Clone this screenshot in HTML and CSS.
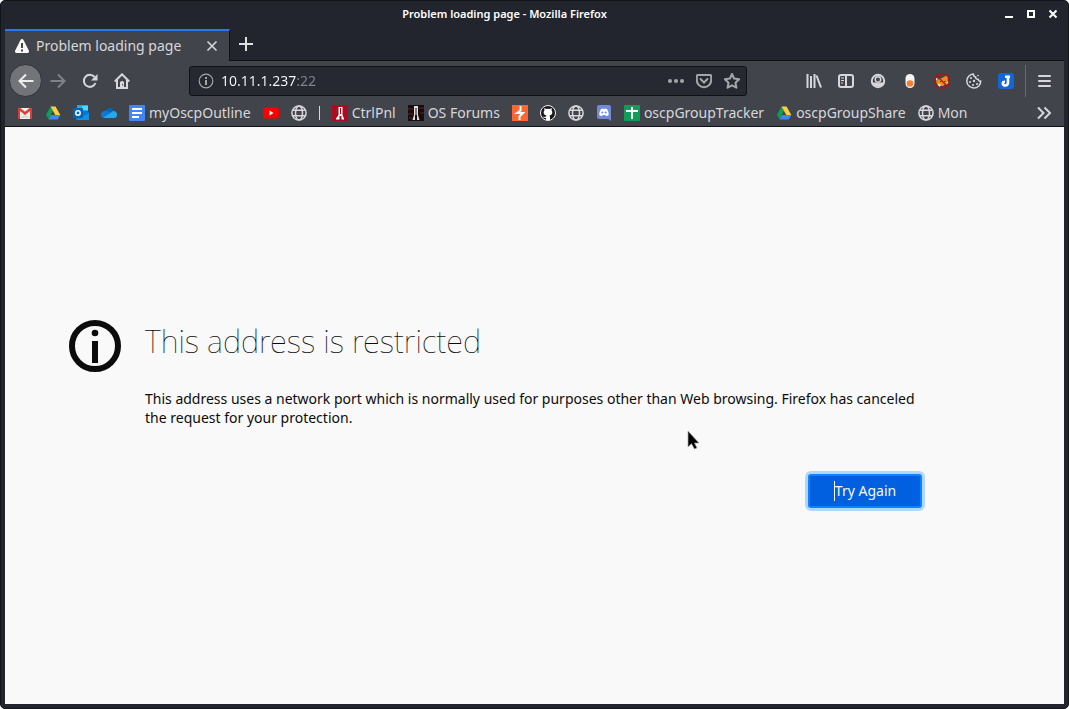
FILE: index.html
```html
<!DOCTYPE html>
<html lang="en">
<head>
<meta charset="utf-8">
<title>Problem loading page - Mozilla Firefox</title>
<link rel="stylesheet" href="styles.css">
</head>
<body>
<svg class="defs" aria-hidden="true">
  <symbol id="globe" viewBox="0 0 16 16"><g fill="none" stroke="currentColor" stroke-width="1.5"><circle cx="8" cy="8" r="7.1"/><ellipse cx="8" cy="8" rx="3.5" ry="7.1"/><path d="M2 5.3h12M2 10.7h12"/></g></symbol>
  <symbol id="drive" viewBox="0 0 16 16"><path fill="#0f9d58" d="M5.5 1.5 8 6 3.6 14.300 1 10z"/><path fill="#ffcd40" d="M5.500 1.500h5L15.300 10h-5z"/><path fill="#4285f4" d="M6 10h9.300l-2.500 4.500H3.500z"/></symbol>
</svg>
<div class="window">
  <header class="titlebar">
    <span class="title">Problem loading page - Mozilla Firefox</span>
    <div class="window-controls">
      <button aria-label="Minimize"><svg viewBox="0 0 10 10"><path fill="#fff" d="M1 7h8v2H1z"/></svg></button>
      <button aria-label="Maximize"><svg viewBox="0 0 10 10"><path fill="none" stroke="#fff" stroke-width="2" d="M2 2h6v6H2z"/></svg></button>
      <button aria-label="Close"><svg viewBox="0 0 10 10"><path stroke="#fff" stroke-width="2" d="m1.500 1.500 7 7m0-7-7 7"/></svg></button>
    </div>
  </header>

  <nav class="tabs" aria-label="Tabs">
    <div class="tab">
      <svg class="icon" viewBox="0 0 16 16"><path fill="#f9f9fa" fill-rule="evenodd" d="M8 1c.7 0 1.200.400 1.500 1l5.300 10.500c.600 1.300 0 2.500-1.300 2.500h-11c-1.300 0-1.900-1.200-1.300-2.500L6.500 2c.3-.6.8-1 1.500-1zM7 5v5h2V5zm0 6.500v2h2v-2z"/></svg>
      <span class="tab-label">Problem loading page</span>
      <button aria-label="Close tab"><svg class="icon" viewBox="0 0 16 16"><path stroke="#d7d7db" stroke-width="1.600" d="m3.500 3.500 9 9m0-9-9 9"/></svg></button>
    </div>
    <button class="new-tab" aria-label="New tab"><svg class="icon" viewBox="0 0 16 16"><path stroke="#e0e0e2" stroke-width="2" d="M8 1v14M1 8h14"/></svg></button>
  </nav>

  <div class="toolbar">
    <button class="back" aria-label="Back"><svg class="icon" viewBox="0 0 16 16"><path class="line" d="M15.500 8H1.500M8 1.500 1.500 8 8 14.500"/></svg></button>
    <button class="dim" aria-label="Forward"><svg class="icon" viewBox="0 0 16 16"><path class="line" d="M.5 8h14M8 1.500 14.500 8 8 14.500"/></svg></button>
    <button aria-label="Reload"><svg class="icon" viewBox="0 0 16 16"><path class="line" d="M13.500 10A6 6 0 1 1 12.500 4"/><path fill="currentColor" d="M15.500 1v6.500H9z"/></svg></button>
    <button aria-label="Home"><svg class="icon" viewBox="0 0 16 16"><path class="line" d="M.8 8.500 8 1.300l7.200 7.200M3 7v7.900h10V7"/><path fill="currentColor" fill-rule="evenodd" d="M6 15V9.500Q6 8 8 8t2 1.500V15zM8.200 11v1.500h1V11z"/></svg></button>
    <div class="urlbar">
      <svg class="icon info" viewBox="0 0 16 16"><circle cx="8" cy="8" r="6.800" fill="none" stroke="currentColor" stroke-width="1.200"/><path fill="currentColor" d="M7 7h2v5H7zM7 4h2v2H7z"/></svg>
      <input type="text" value="10.11.1.237:22" aria-label="Address">
      <button aria-label="Page actions"><svg class="icon" viewBox="0 0 16 16"><g fill="currentColor"><circle cx="2" cy="8" r="2"/><circle cx="8" cy="8" r="2"/><circle cx="14" cy="8" r="2"/></g></svg></button>
      <button aria-label="Save to Pocket"><svg class="icon" viewBox="0 0 16 16"><path class="line" d="M2 2h12q1.200 0 1.200 1.200V7a7.200 7.200 0 0 1-14.400 0V3.200Q.8 2 2 2z"/><path class="line" stroke-linecap="round" d="M4.500 6 8 9.500 11.500 6"/></svg></button>
      <button aria-label="Bookmark this page"><svg class="icon" viewBox="0 0 16 16"><path class="line" stroke-linejoin="round" d="m8 1 2.100 4.500 5 .7-3.600 3.500.9 5L8 12.300l-4.400 2.400.9-5L.9 6.200l5-.7z"/></svg></button>
    </div>
    <div class="tools">
      <button aria-label="Library"><svg class="icon" viewBox="0 0 16 16"><path class="line" d="M1.500 1v14M5 3v12M8.500 1v14M10.500 2.500l4.500 12"/></svg></button>
      <button aria-label="Sidebars"><svg class="icon" viewBox="0 0 16 16"><rect class="line" x="1" y="2" width="14" height="12" rx="2"/><path class="line" d="M8 2v12"/><path stroke="currentColor" d="M3 5h3M3 7.500h3M3 10h2"/></svg></button>
      <button aria-label="Account"><svg class="icon" viewBox="0 0 16 16"><circle class="line" cx="8" cy="8" r="6.200"/><circle class="line thin" cx="8" cy="6.500" r="2.700"/><path fill="currentColor" d="M2.500 9.500h3.300q2.200 1.600 4.400 0h3.300c-1 5.500-10 5.500-11 0z"/></svg></button>
      <button aria-label="Proxy switch"><svg class="icon" viewBox="0 0 16 16"><rect x="3.500" y="1" width="9" height="14" rx="4.500" fill="#f4f4f4"/><circle cx="8" cy="10.500" r="3.300" fill="#f58033"/></svg></button>
      <button aria-label="Fox extension"><svg class="icon" viewBox="0 0 16 16"><path fill="#e8901c" d="m8 5 4.500-2.500L14 4l-.5 5.500L9 13l-4.500-.5L2 9l2-2.500z"/><path fill="#f6e6c8" d="m1.500 5 2.500.5L2.500 8zM3 10.500l4 1L5.500 14zM13.500 8l1 1.500-3 3z"/><path fill="#5a3b20" d="M6 8h1v1H6zM10 8h1.500v1H10z"/><circle cx="8" cy="8" r="7.300" fill="none" stroke="#c4090c" stroke-width="1.200"/><path stroke="#c4090c" stroke-width="1.200" d="m3 3 10 10"/></svg></button>
      <button aria-label="Cookies"><svg class="icon" viewBox="0 0 16 16"><path class="line round thin" d="M7.500 1a7 7 0 1 0 7.300 7c-1.400.500-2.500-.3-2.400-1.800-2 .3-3.100-.7-2.600-2.200C8 3.800 7.300 2.800 7.500 1z"/><g fill="currentColor"><circle cx="5" cy="5" r="1"/><circle cx="4" cy="9" r="1"/><circle cx="8" cy="8" r="1.200"/><circle cx="7" cy="12" r="1"/><circle cx="11" cy="11" r="1"/><circle cx="12" cy="2.500" r=".8"/></g></svg></button>
      <button aria-label="Joplin"><svg class="icon" viewBox="0 0 16 16"><rect width="16" height="16" rx="3" fill="#1267d8"/><path fill="none" stroke="#fff" stroke-width="2.600" d="M7 3.800h5M10 3.800v5.700q0 3-2.600 3T4.800 10.300q0-1.600 2.200-1.500"/></svg></button>
    </div>
    <button class="menu" aria-label="Open menu"><svg class="icon" viewBox="0 0 16 16"><path class="line" stroke-linecap="round" d="M3 3h11M3 8h11M3 13h11"/></svg></button>
  </div>

  <nav class="bookmarks" aria-label="Bookmarks">
    <a href="#" aria-label="Gmail"><svg class="icon" viewBox="0 0 16 16"><path fill="#f1f1f1" d="M2 3h12v11H2z"/><path fill="#ddd" d="m3 13 5-5 5 5z"/><path fill="#d93f32" d="M1 14V3.500Q1.500 2 3 2.700l5 4 5-4q1.500-.7 2 .8V14h-2V6l-5 4-5-4v8z"/></svg></a>
    <a href="#" aria-label="Google Drive"><svg class="icon"><use href="#drive"/></svg></a>
    <a href="#" aria-label="Outlook"><svg class="icon" viewBox="0 0 16 16"><path fill="#28a8ea" d="M4 0h11v8H4z"/><path fill="#50d9ff" d="M9 1h6v4H9z"/><path fill="#0078d4" d="M3 6h12l1 2v7H3z"/><path fill="#1490df" d="m3 15 13-7v7z"/><rect y="3" width="10" height="10" rx="1" fill="#0364b8"/><circle cx="5" cy="8" r="2.200" fill="none" stroke="#fff" stroke-width="1.500"/></svg></a>
    <a href="#" aria-label="OneDrive"><svg class="icon" viewBox="0 0 16 16"><path fill="#0364b8" d="M4 6c2-4 7-4 8.500-.5L13 9H3z"/><path fill="#0f78d4" d="M3 6q4-1 7 2.500l-8 4Q0 12 0 9.500T3 6z"/><path fill="#28a8ea" d="M2 12.500 8 9l4-3q4 0 4 3.500T13 13H3z"/></svg></a>
    <a href="#"><svg class="icon" viewBox="0 0 16 16"><rect width="16" height="16" rx="1" fill="#4285f4"/><path stroke="#fff" stroke-width="2" d="M3 4h10M3 8h10M3 12h7"/></svg>myOscpOutline</a>
    <a href="#" aria-label="YouTube"><svg class="icon" viewBox="0 0 16 16"><rect y="2.500" width="16" height="11" rx="3" fill="#f00"/><path fill="#fff" d="m6.500 5.500 4 2.500-4 2.500z"/></svg></a>
    <a href="#" aria-label="Website"><svg class="icon"><use href="#globe"/></svg></a>
    <span class="divider"></span>
    <a href="#"><svg class="icon" viewBox="0 0 16 16"><path fill="#ae0a20" d="M0 0h16v16H0z"/><path fill="#fff" d="M6.500 2h4v8l1.500 3.500v1H9.500V11h-2v3.500H4v-1L6.500 10z"/><path fill="#ae0a20" d="M8 3h1v6H8z"/></svg>CtrlPnl</a>
    <a href="#"><svg class="icon" viewBox="0 0 16 16"><path fill="#180c0d" d="M0 0h16v16H0z"/><path stroke="#642328" d="M0 4h5M11 3h5M0 9h5M12 8h4M1 13h3"/><path fill="#ddd" d="M6 1h4v9l1.500 5H9v-5H7v5H4.500L6 10z"/><path fill="#111" d="M7.500 3h1v7h-1z"/></svg>OS Forums</a>
    <a href="#" aria-label="Burp Suite"><svg class="icon" viewBox="0 0 16 16"><path fill="#ff6633" d="M0 0h16v16H0z"/><path fill="none" stroke="#fff" stroke-width="2" d="M8.500 1v4.500L5 8h6l-3.500 3.500V15"/></svg></a>
    <a href="#" aria-label="GitHub"><svg class="icon" viewBox="0 0 16 16"><circle cx="8" cy="8" r="7.500" fill="#191717" stroke="#f5f5f5"/><path fill="#fff" d="M6 15v-2q-2.500.6-3.300-1.700 1.700 1.200 3.300.3l.6-1C3.500 10 3 7 4.400 5.400L4.300 3l2 .9q1.700-.4 3.400 0l2-.9-.1 2.400C13 7 12.500 10 9.400 10.600q.6.600.6 1.400v3z"/></svg></a>
    <a href="#" aria-label="Website"><svg class="icon"><use href="#globe"/></svg></a>
    <a href="#" aria-label="Discord"><svg class="icon" viewBox="0 0 16 16"><path fill="#7289da" d="M3 0h10q2 0 2 2v14l-3-2H3q-2 0-2-2V2Q1 0 3 0z"/><path fill="#fff" d="m5 4 2-.5.5.5h1l.5-.5 2 .5q1.700 2.500 1.700 6-1 1-2.700 1l-.7-1H6.700L6 11q-1.700 0-2.700-1 0-3.500 1.700-6z"/><circle cx="6.300" cy="7.500" r="1.100" fill="#7289da"/><circle cx="9.700" cy="7.500" r="1.100" fill="#7289da"/></svg></a>
    <a href="#"><svg class="icon" viewBox="0 0 16 16"><rect width="16" height="16" rx="1" fill="#0f9d58"/><path stroke="#fff" stroke-width="2" d="M8 2v12M2 6h12"/></svg>oscpGroupTracker</a>
    <a href="#"><svg class="icon"><use href="#drive"/></svg>oscpGroupShare</a>
    <a href="#"><svg class="icon"><use href="#globe"/></svg>Mon</a>
    <button class="more" aria-label="Show more bookmarks"><svg class="icon" viewBox="0 0 16 16"><path class="line" d="m2 2.500 5.500 5.500L2 13.500M8.500 2.500 14 8l-5.500 5.500"/></svg></button>
  </nav>

  <main class="page">
    <section class="error">
      <svg class="error-icon" viewBox="0 0 52 52"><circle cx="26" cy="26" r="23" fill="none" stroke="#0c0c0d" stroke-width="6"/><circle cx="26" cy="13" r="3.300" fill="#0c0c0d"/><path fill="#0c0c0d" d="M23 21h6v22h-6z"/></svg>
      <div class="error-body">
        <h1>This address is restricted</h1>
        <p>This address uses a network port which is normally used for purposes other than Web browsing. Firefox has canceled the request for your protection.</p>
        <button class="retry">Try Again</button>
      </div>
    </section>
    <svg class="cursor" viewBox="0 0 14 20" aria-hidden="true"><path fill="#000" stroke="#aaa" stroke-width=".7" d="M1 1v16l3.500-3.300L7.500 19l2.500-1-2.500-5H12z"/></svg>
  </main>
</div>
</body>
</html>
```

FILE: styles.css
```css
* { box-sizing: border-box; }

body {
  margin: 0;
  background: #fff;
  font: 14px/20px "Noto Sans", sans-serif;
}

button {
  display: flex;
  align-items: center;
  justify-content: center;
  padding: 0;
  border: 0;
  background: none;
  color: inherit;
  font: inherit;
}

.defs { position: absolute; width: 0; height: 0; }
.icon { display: block; flex: none; width: 16px; height: 16px; }
.line { fill: none; stroke: currentColor; stroke-width: 2; }
.thin { stroke-width: 1.5; }
.round { stroke-linejoin: round; }

.window {
  display: flex;
  flex-direction: column;
  height: 100vh;
  padding: 0 4px 4px;
  border: 1px solid #12141a;
  border-radius: 5px;
  background: #22252e;
  color: #d7d7db;
}

.titlebar {
  display: flex;
  align-items: center;
  height: 28px;
  padding: 0 6px 2px 0;
}
.title {
  flex: 1;
  color: #fff;
  font-size: 11px;
  font-weight: 600;
  text-align: center;
}
.window-controls { display: flex; gap: 12px; }
.window-controls svg { display: block; width: 10px; height: 10px; }

.tabs { display: flex; height: 32px; border-bottom: 1px solid #101116; }
.tab {
  display: flex;
  align-items: center;
  gap: 6px;
  width: 225px;
  height: 32px;
  padding: 0 9px 1px;
  border-top: 2px solid #2b76f0;
  border-right: 1px solid #101116;
  background: #42444b;
}
.tab-label { flex: 1; white-space: nowrap; }
.new-tab { width: 32px; padding-bottom: 2px; }

.toolbar {
  display: flex;
  align-items: center;
  height: 39px;
  padding: 0 3px 0 4px;
  background: #42444b;
}
.toolbar > button { width: 32px; height: 32px; }
.toolbar > .back {
  width: 33px;
  height: 33px;
  border: 1px solid #303238;
  border-radius: 50%;
  background: #737479;
  color: #eee;
}
.toolbar .dim { color: #808288; }
.urlbar {
  display: flex;
  flex: 1;
  align-items: center;
  gap: 12px;
  height: 30px;
  margin: 0 51px;
  padding: 0 6px 0 8px;
  border: 1px solid #101116;
  border-radius: 3px;
  background: #262832;
  color: #a5a6aa;
}
.urlbar .info { margin-right: -5px; }
.urlbar input {
  flex: 1;
  min-width: 0;
  padding: 0;
  border: 0;
  background: linear-gradient(90deg, #f9f9fa 75px, #85868c 75px);
  background-clip: text;
  color: transparent;
  font: inherit;
  outline: 0;
}
.tools { display: flex; padding-right: 3px; }
.tools button { width: 32px; height: 32px; }
.toolbar .menu { width: 36px; border-left: 1px solid #686a70; }

.bookmarks {
  display: flex;
  align-items: center;
  gap: 12px;
  height: 27px;
  padding: 0 12px;
  border-bottom: 1px solid #101116;
  background: #42444b;
}
.bookmarks a {
  display: flex;
  align-items: center;
  gap: 4px;
  color: inherit;
  text-decoration: none;
  white-space: nowrap;
}
.divider { width: 1px; height: 14px; background: #d7d7db; }
.more { margin-left: auto; }

.page {
  position: relative;
  display: flex;
  flex: 1;
  align-items: center;
  justify-content: center;
  padding: 0 140px 0 64px;
  background: #f9f9f9;
  color: #0c0c0d;
}
.error { display: flex; gap: 24px; width: 100%; max-width: 856px; }
.error-icon { flex: none; width: 52px; height: 52px; }
.error-body { display: flex; flex: 1; flex-direction: column; }
h1 { margin: 0; font-size: 31px; font-weight: 100; line-height: 42px; }
p { margin: 27px 0 47px; line-height: 19px; }
.retry {
  align-self: flex-end;
  width: 114px;
  height: 34px;
  margin: 0 2px 4px 0;
  border: 2px solid #0a84ff;
  border-radius: 3px;
  background: #0060df;
  box-shadow: 0 0 0 3px #b3d7fc;
  color: #f9f9fa;
}
.retry::before { content: ""; width: 1px; height: 20px; background: #fff; }
.cursor { position: absolute; left: 682px; top: 303px; width: 14px; height: 20px; }
```
